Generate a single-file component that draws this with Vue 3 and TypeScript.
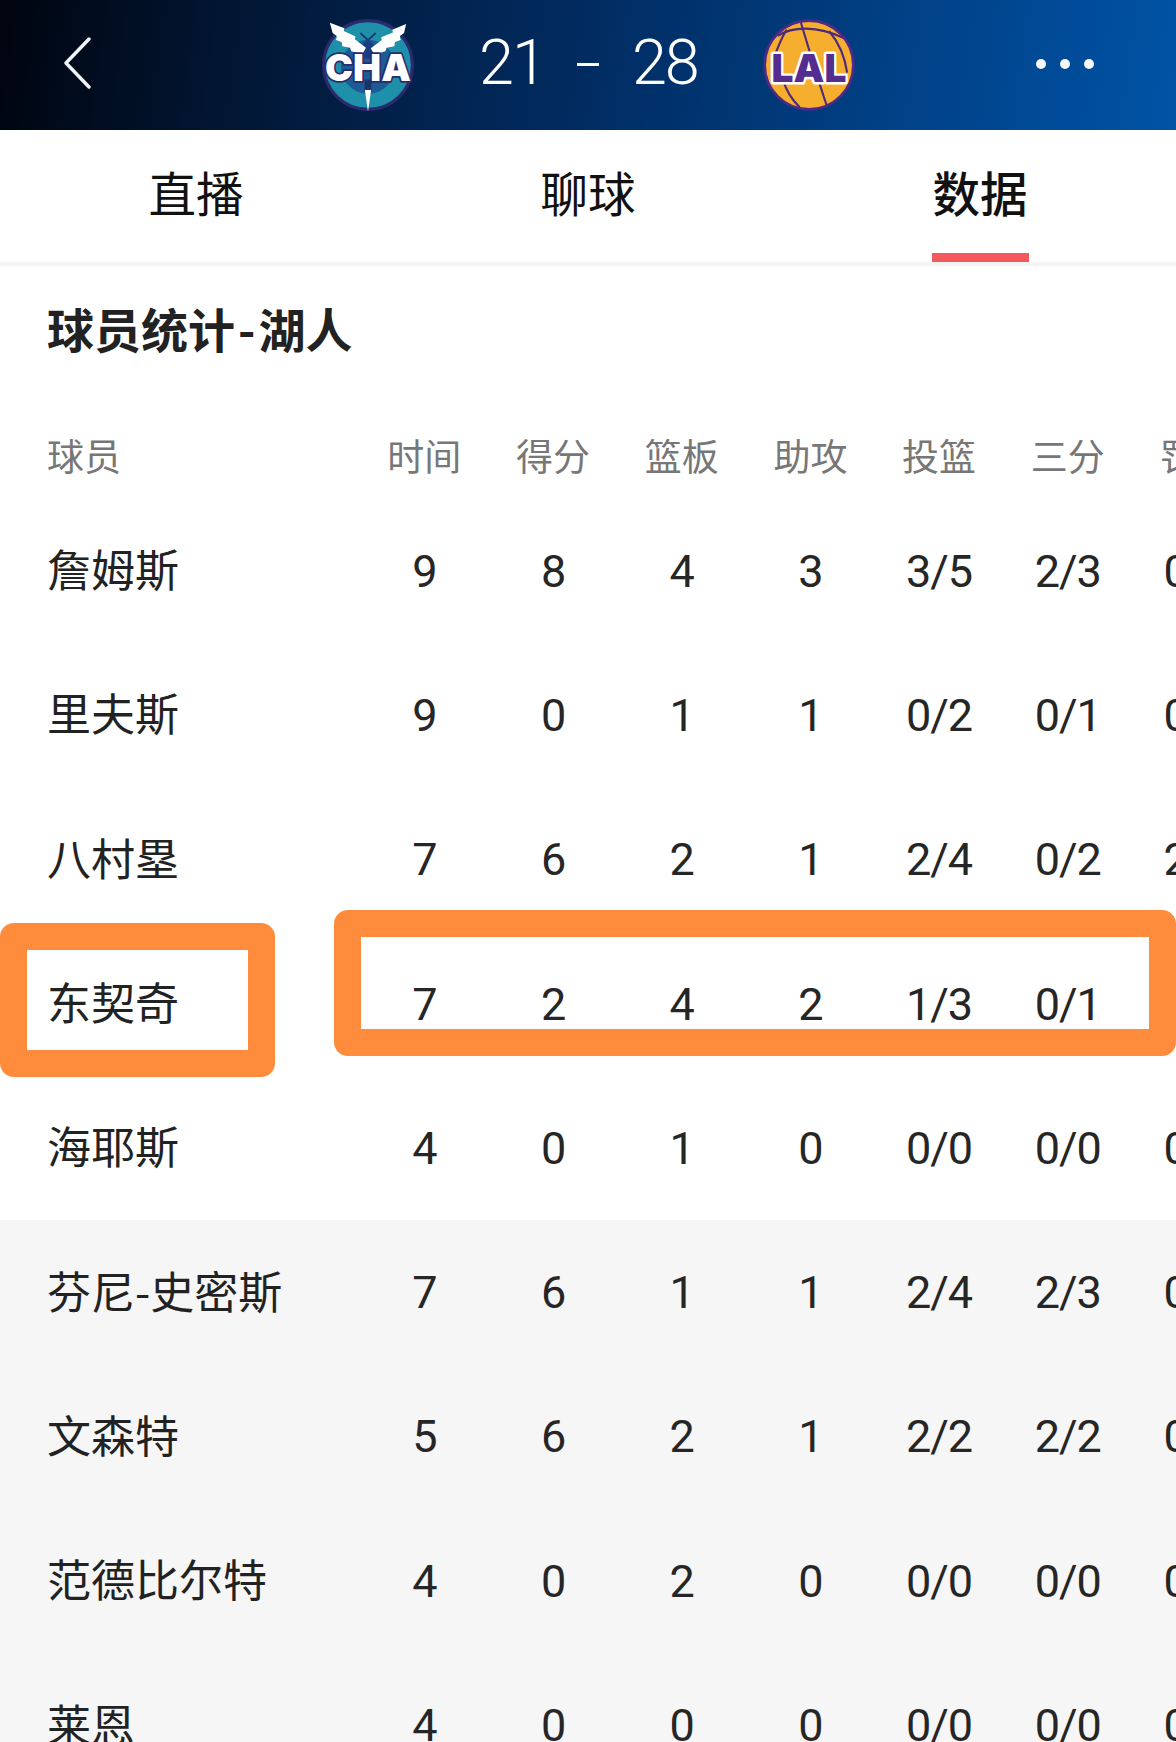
<script setup lang="ts">
interface Player {
  name: string
  stats: string[]
}

const tabs: string[] = ['直播', '聊球', '数据']
const heads: string[] = ['时间', '得分', '篮板', '助攻', '投篮', '三分', '罚球']
const starters: Player[] = [
  { name: '詹姆斯', stats: ['9', '8', '4', '3', '3/5', '2/3', '0/0'] },
  { name: '里夫斯', stats: ['9', '0', '1', '1', '0/2', '0/1', '0/0'] },
  { name: '八村塁', stats: ['7', '6', '2', '1', '2/4', '0/2', '2/2'] },
  { name: '东契奇', stats: ['7', '2', '4', '2', '1/3', '0/1', '0/0'] },
  { name: '海耶斯', stats: ['4', '0', '1', '0', '0/0', '0/0', '0/0'] },
]
const bench: Player[] = [
  { name: '芬尼-史密斯', stats: ['7', '6', '1', '1', '2/4', '2/3', '0/0'] },
  { name: '文森特', stats: ['5', '6', '2', '1', '2/2', '2/2', '0/0'] },
  { name: '范德比尔特', stats: ['4', '0', '2', '0', '0/0', '0/0', '0/0'] },
  { name: '莱恩', stats: ['4', '0', '0', '0', '0/0', '0/0', '0/0'] },
]
</script>

<template>
  <div class="page">
    <header class="topbar">
      <svg class="back" viewBox="0 0 28 52" fill="none">
        <path d="M26 2 L3 26 L26 50" stroke="#f2f5f8" stroke-width="3.4" stroke-linecap="round" stroke-linejoin="round" />
      </svg>
      <svg class="logo logo-cha" viewBox="48 40 300 300">
        <circle cx="198" cy="190" r="128" fill="#1f90a9" stroke="#2a2b6e" stroke-width="9" />
        <circle cx="198" cy="195" r="78" fill="#1c5c94" />
        <path d="M198 118 L176 98 M198 118 L220 98" stroke="#16306a" stroke-width="5" />
        <path d="M198 114 L216 134 L208 172 L188 172 L180 134 Z" fill="#1a3d80" />
        <path d="M88 68 L130 84 L128 92 L162 108 L160 116 L192 140 L182 158 L150 150 L146 140 L124 136 L122 124 L106 118 L108 106 L96 98 Z" fill="#fff" />
        <path d="M308 72 L268 88 L270 96 L236 110 L238 118 L206 142 L216 160 L248 150 L252 140 L274 136 L276 124 L292 118 L290 106 L302 98 Z" fill="#fff" />
        <rect x="188" y="232" width="20" height="34" fill="#1a3568" />
        <path d="M189 262 L198 324 L207 262 Z" fill="#fff" />
        <text class="logo-text cha-text" x="198" y="236" text-anchor="middle">CHA</text>
      </svg>
      <div class="score">
        <span class="score-num score-a">21</span>
        <span class="score-dash"></span>
        <span class="score-num">28</span>
      </div>
      <svg class="logo logo-lal" viewBox="42 40 300 300">
        <circle cx="192" cy="190" r="128" fill="#f5ae2e" stroke="#4d2a86" stroke-width="8" />
        <g fill="none" stroke="#4d2a7c" stroke-width="6">
          <path d="M128 88 C112 110 105 135 92 165" />
          <path d="M102 106 C145 78 215 76 292 112" />
          <path d="M168 66 C188 130 215 225 245 312" />
          <path d="M118 235 C128 270 148 295 165 312" />
          <path d="M250 92 C280 128 296 170 302 212" />
        </g>
        <text class="logo-text lal-text" x="192" y="238" text-anchor="middle">LAL</text>
      </svg>
      <div class="more">
        <i class="dot"></i><i class="dot"></i><i class="dot"></i>
      </div>
    </header>

    <nav class="tabs">
      <div v-for="(tab, i) in tabs" :key="tab" class="tab" :class="{ active: i === 2 }">
        <span>{{ tab }}</span>
      </div>
    </nav>

    <section class="stats">
      <h2 class="title">球员统计<span class="title-sep">-</span>湖人</h2>
      <div class="row head">
        <div class="name">球员</div>
        <div v-for="h in heads" :key="h" class="cell">{{ h }}</div>
      </div>
      <div v-for="p in starters" :key="p.name" class="row">
        <div class="name">{{ p.name }}</div>
        <div v-for="(s, i) in p.stats" :key="i" class="cell num">{{ s }}</div>
      </div>
      <div class="bench">
        <div v-for="p in bench" :key="p.name" class="row">
          <div class="name">{{ p.name }}</div>
          <div v-for="(s, i) in p.stats" :key="i" class="cell num">{{ s }}</div>
        </div>
      </div>
      <div class="mark mark-name"></div>
      <div class="mark mark-stats"></div>
    </section>
  </div>
</template>

<style>
html,
body {
  margin: 0;
  background: #fff;
}
</style>

<style scoped>
.page {
  width: 1176px;
  height: 1742px;
  overflow: hidden;
  background: #fff;
  font-family: "Noto Sans CJK SC", "Noto Sans", sans-serif;
  color: #222;
}
.topbar {
  height: 130px;
  display: flex;
  align-items: center;
  background: linear-gradient(98deg, #00050f 0%, #021a3c 25%, #012c62 50%, #0053a6 100%);
}
.back {
  width: 28px;
  height: 52px;
  margin: 0 0 5px 63px;
  flex: none;
}
.logo {
  width: 104px;
  height: 104px;
  flex: none;
}
.logo-cha {
  margin-left: 225px;
}
.logo-lal {
  margin-left: -2px;
}
.logo-text {
  font-family: Inter, "Liberation Sans", sans-serif;
  font-weight: 900;
  paint-order: stroke;
  stroke-linejoin: round;
}
.cha-text {
  font-size: 108px;
  fill: #fff;
  stroke: #2a2b6e;
  stroke-width: 10px;
}
.lal-text {
  font-size: 112px;
  fill: #552d91;
  stroke: #fff;
  stroke-width: 14px;
}
.score {
  width: 339px;
  flex: none;
  display: flex;
  align-items: center;
  color: #fff;
  font-family: Roboto, sans-serif;
  font-weight: 300;
  font-size: 63px;
  line-height: 1;
  letter-spacing: -2px;
  padding-bottom: 5px;
}
.score-a {
  margin-left: 59px;
}
.score-dash {
  width: 22px;
  height: 3px;
  background: #fff;
  margin: 4px 33px 0 32px;
}
.more {
  margin: 0 0 2px 175px;
  display: flex;
  gap: 14px;
}
.dot {
  width: 10px;
  height: 10px;
  border-radius: 50%;
  background: #f4f8fc;
}
.tabs {
  display: grid;
  grid-template-columns: repeat(3, 392px);
  height: 132px;
  border-bottom: 4px solid #f4f4f4;
}
.tab {
  text-align: center;
  font-size: 47.5px;
  color: #111;
}
.tab span {
  display: inline-block;
  height: 123px;
  line-height: 124px;
  padding: 0 1px;
  border-bottom: 9px solid transparent;
}
.tab.active {
  font-weight: 500;
}
.tab.active span {
  border-bottom-color: #f4585c;
}
.stats {
  position: relative;
}
.title {
  margin: 0;
  height: 130px;
  padding-left: 47px;
  font-size: 47px;
  line-height: 124px;
  font-weight: 700;
  color: #222;
}
.title-sep {
  padding: 0 3px;
}
.row {
  display: grid;
  grid-template-columns: 360px repeat(7, 128.7px);
  height: 144.3px;
  align-items: center;
  font-size: 44px;
  white-space: nowrap;
}
.row.head {
  padding-top: 18px;
  height: 85px;
  font-size: 37px;
  color: #777;
}
.name {
  padding-left: 47px;
  padding-bottom: 6px;
}
.head .name,
.head .cell {
  padding-bottom: 3px;
}
.cell {
  text-align: center;
}
.num {
  font-family: Roboto, sans-serif;
  font-size: 45px;
  letter-spacing: -1px;
  color: #262626;
}
.bench {
  background: #f6f6f6;
}
.mark {
  position: absolute;
  box-sizing: border-box;
  border: 27px solid #ff8c3c;
  border-radius: 14px;
}
.mark-name {
  left: 0;
  top: 657px;
  width: 275px;
  height: 154px;
}
.mark-stats {
  left: 334px;
  top: 644px;
  width: 842px;
  height: 146px;
}
</style>
